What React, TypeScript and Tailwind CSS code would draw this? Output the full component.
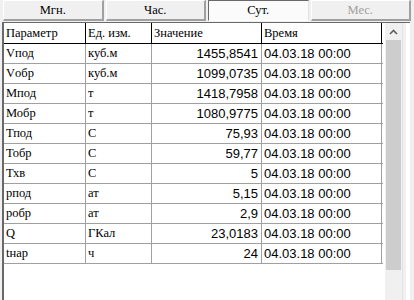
import React from "react";

const rows = [
  ["Vпод", "куб.м", "1455,8541"],
  ["Vобр", "куб.м", "1099,0735"],
  ["Мпод", "т", "1418,7958"],
  ["Мобр", "т", "1080,9775"],
  ["Тпод", "С", "75,93"],
  ["Тобр", "С", "59,77"],
  ["Тхв", "С", "5"],
  ["pпод", "ат", "5,15"],
  ["pобр", "ат", "2,9"],
  ["Q", "ГКал", "23,0183"],
  ["tнар", "ч", "24"],
];

function Tab({ label, pressed, disabled }: { label: string; pressed?: boolean; disabled?: boolean }) {
  if (pressed) {
    return (
      <div className="h-[21px] flex items-center justify-center bg-[#fbfbfb] border-t border-l border-t-[#696969] border-l-[#696969] border-b border-r border-b-[#ffffff] border-r-[#e3e3e3] text-black">
        {label}
      </div>
    );
  }
  return (
    <div
      className={
        disabled
          ? "h-[21px] flex items-center justify-center bg-[#f0f0f0] border-t border-l border-t-[#ffffff] border-l-[#ffffff] border-b-2 border-r-2 border-b-[#a0a0a0] border-r-[#a0a0a0] text-[#a0a0a0]"
          : "h-[21px] flex items-center justify-center bg-[#f0f0f0] border-t border-l border-t-[#ffffff] border-l-[#ffffff] border-b-2 border-r-2 border-b-[#a0a0a0] border-r-[#a0a0a0] text-black"
      }
    >
      {label}
    </div>
  );
}

export default function App() {
  return (
    <div className="w-[414px] h-[300px] bg-[#f0f0f0] overflow-hidden flex flex-col [font-family:'Liberation_Serif','Times_New_Roman',serif] text-[12.5px]">
      <div className="grid grid-cols-4 gap-[2px] px-[3px] pt-0 pb-[1px]">
        <Tab label="Мгн." />
        <Tab label="Час." />
        <Tab label="Сут." pressed />
        <Tab label="Мес." disabled />
      </div>

      <div className="flex flex-1 ml-[2px] mr-[4px] border-l-2 border-t border-[#696969] bg-white">
        <div className="w-[379px] bg-white">
          {/* header */}
          <div className="grid grid-cols-[82px_66px_110px_120px] h-[21px] border-b border-black">
            {["Параметр", "Ед. изм.", "Значение", "Время"].map((h) => (
              <div key={h} className="flex items-center pl-[2px] border-r border-black">
                {h}
              </div>
            ))}
          </div>
          {rows.map((r) => (
            <div key={r[0]} className="grid grid-cols-[82px_66px_110px_120px] h-[20px] border-b border-[#a0a0a0]">
              <div className="flex items-center pl-[2px] border-r border-[#a0a0a0]">{r[0]}</div>
              <div className="flex items-center pl-[2px] border-r border-[#a0a0a0]">{r[1]}</div>
              <div className="flex items-center justify-end pr-[3px] border-r border-[#a0a0a0] [font-family:'Liberation_Sans',Arial,sans-serif] text-[13px]">
                {r[2]}
              </div>
              <div className="flex items-center pl-[2px] border-r border-[#a0a0a0] [font-family:'Liberation_Sans',Arial,sans-serif] text-[13px]">
                04.03.18 00:00
              </div>
            </div>
          ))}
        </div>

        {/* scrollbar */}
        <div className="w-[17px] ml-[2px] bg-[#f0f0f0] flex flex-col">
          <div className="h-[17px] flex items-center justify-center">
            <svg width="9" height="6" viewBox="0 0 9 6">
              <path d="M1 5 L4.5 1.5 L8 5" fill="none" stroke="#606060" strokeWidth="1.6" />
            </svg>
          </div>
          <div className="h-[230px] mx-[1px] bg-[#cdcdcd]" />
          <div className="flex-1" />
        </div>
        <div className="w-[4px] border-l border-[#e3e3e3] bg-[#f0f0f0]" />
      </div>
    </div>
  );
}
